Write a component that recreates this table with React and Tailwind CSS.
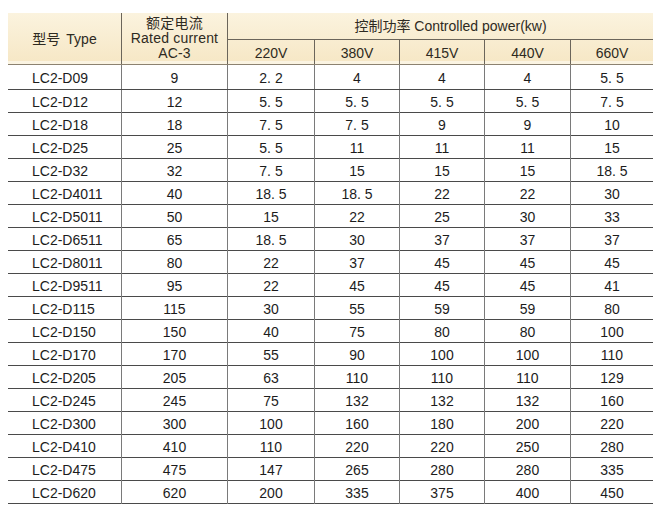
import React from "react";

const rows = [
  ["LC2-D09", "9", "2. 2", "4", "4", "4", "5. 5"],
  ["LC2-D12", "12", "5. 5", "5. 5", "5. 5", "5. 5", "7. 5"],
  ["LC2-D18", "18", "7. 5", "7. 5", "9", "9", "10"],
  ["LC2-D25", "25", "5. 5", "11", "11", "11", "15"],
  ["LC2-D32", "32", "7. 5", "15", "15", "15", "18. 5"],
  ["LC2-D4011", "40", "18. 5", "18. 5", "22", "22", "30"],
  ["LC2-D5011", "50", "15", "22", "25", "30", "33"],
  ["LC2-D6511", "65", "18. 5", "30", "37", "37", "37"],
  ["LC2-D8011", "80", "22", "37", "45", "45", "45"],
  ["LC2-D9511", "95", "22", "45", "45", "45", "41"],
  ["LC2-D115", "115", "30", "55", "59", "59", "80"],
  ["LC2-D150", "150", "40", "75", "80", "80", "100"],
  ["LC2-D170", "170", "55", "90", "100", "100", "110"],
  ["LC2-D205", "205", "63", "110", "110", "110", "129"],
  ["LC2-D245", "245", "75", "132", "132", "132", "160"],
  ["LC2-D300", "300", "100", "160", "180", "200", "220"],
  ["LC2-D410", "410", "110", "220", "220", "250", "280"],
  ["LC2-D475", "475", "147", "265", "280", "280", "335"],
  ["LC2-D620", "620", "200", "335", "375", "400", "450"],
];

const volts = ["220V", "380V", "415V", "440V", "660V"];

export default function App() {
  return (
    <div
      className="w-[664px] h-[511px] bg-white pt-[13px] pl-[8px] text-[14px] text-[#1c1c1c]"
      style={{ fontFamily: '"Liberation Sans", "Noto Sans CJK SC", sans-serif' }}
    >
      <div className="w-[645px]">
        {/* header */}
        <div className="grid grid-cols-[114px_106px_87px_85px_85px_86px_82px] grid-rows-[27px_24px] bg-gradient-to-b from-[#fbf3de] to-[#f6e7c5] border-b border-[#8c8270] shadow-[inset_0_-3px_0_#fbf4e2] text-[#2e2a22]">
          <div className="row-span-2 flex items-center justify-center gap-[6px] pt-[1px] border-r border-[#6b655a]">
            <span>型号</span>
            <span>Type</span>
          </div>
          <div className="row-span-2 flex flex-col items-center justify-center leading-[15px] tracking-[0.2px] border-r border-[#6b655a]">
            <span>额定电流</span>
            <span>Rated current</span>
            <span>AC-3</span>
          </div>
          <div className="col-span-5 flex items-center justify-center border-b border-[#6b655a] pt-[1px] pl-[20px]">
            控制功率 Controlled power(kw)
          </div>
          {volts.map((v, i) => (
            <div
              key={v}
              className={
                "flex items-center justify-center pt-[2px] " +
                (i < 4 ? "border-r border-[#6b655a]" : "")
              }
            >
              {v}
            </div>
          ))}
        </div>
        {/* body */}
        {rows.map((r, ri) => (
          <div
            key={r[0]}
            className={
              "grid grid-cols-[114px_106px_87px_85px_85px_86px_82px] border-b border-[#4a4a4a] " +
              (ri === 0 ? "h-[25px]" : "h-[23px]")
            }
          >
            {r.map((c, ci) => (
              <div
                key={ci}
                className={
                  "flex items-center pt-[2px] " +
                  (ci === 0 ? "pl-[24px] " : "justify-center ") +
                  (ci < 6 ? "border-r border-[#7a7a7a]" : "")
                }
              >
                {c}
              </div>
            ))}
          </div>
        ))}
      </div>
    </div>
  );
}
